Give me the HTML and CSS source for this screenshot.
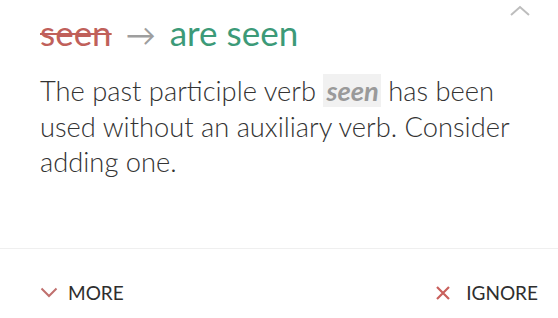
FILE: index.html
```html
<!DOCTYPE html>
<html>
<head>
<meta charset="utf-8">
<link rel="stylesheet" href="styles.css">
</head>
<body>
<div class="card">
  <button class="collapse" aria-label="Collapse">
    <svg width="22" height="12" viewBox="0 0 22 12"><polyline points="2,10 11,2 20,10" fill="none" stroke="#bdbdbd" stroke-width="2"/></svg>
  </button>
  <div class="main">
    <h1 class="title"><span class="old">seen</span><span class="arrow">→</span><span class="new">are seen</span></h1>
    <p class="desc">The past participle verb <span class="hl">seen</span> has been used without an auxiliary verb. Consider adding one.</p>
  </div>
  <div class="actions">
    <button class="act act-more">
      <svg width="18" height="11" viewBox="0 0 18 11"><polyline points="1.5,1.5 9,9 16.5,1.5" fill="none" stroke="#c0706e" stroke-width="2"/></svg>
      <span>MORE</span>
    </button>
    <button class="act act-ignore">
      <svg width="16" height="16" viewBox="0 0 16 16"><path d="M2 2L14 14M14 2L2 14" fill="none" stroke="#c9605c" stroke-width="2.2"/></svg>
      <span>IGNORE</span>
    </button>
  </div>
</div>
</body>
</html>
```

FILE: styles.css
```css
html, body {
  margin: 0;
  padding: 0;
  background: #ffffff;
}
body {
  font-family: Lato, "Open Sans", sans-serif;
  width: 558px;
  height: 318px;
  overflow: hidden;
}
.card {
  position: relative;
  display: flex;
  flex-direction: column;
  height: 318px;
}
.collapse {
  position: absolute;
  top: 5px;
  right: 27px;
  border: 0;
  background: none;
  padding: 0;
}
.main {
  padding: 10px 20px 0 40px;
  height: 249px;
  border-bottom: 1px solid #efefef;
  box-sizing: border-box;
}
.title {
  margin: 0;
  font-weight: 400;
  font-size: 35px;
  line-height: 44px;
  display: flex;
  align-items: baseline;
}
.old {
  color: #c0605a;
  text-decoration: line-through;
  text-decoration-thickness: 2px;
}
.arrow {
  color: #9e9e9e;
  font-size: 30px;
  margin: 0 14px 0 14px;
}
.new {
  color: #3c9a78;
}
.desc {
  margin: 17px 0 0 0;
  font-weight: 300;
  font-size: 27.3px;
  line-height: 35.5px;
  color: #333333;
}
.hl {
  font-weight: 700;
  font-style: italic;
  color: #9a9a9a;
  background: #f1f1f1;
  padding: 0 2px 0 3px;
}
.actions {
  display: flex;
  justify-content: space-between;
  align-items: center;
  padding: 18px 20px 0 40px;
  flex: 1;
}
.act {
  display: flex;
  align-items: center;
  border: 0;
  background: none;
  padding: 0;
  font-family: Lato, sans-serif;
  font-size: 19px;
  color: #2e2e2e;
}
.act-more {
  gap: 10px;
}
.act-ignore {
  gap: 15px;
}
```
